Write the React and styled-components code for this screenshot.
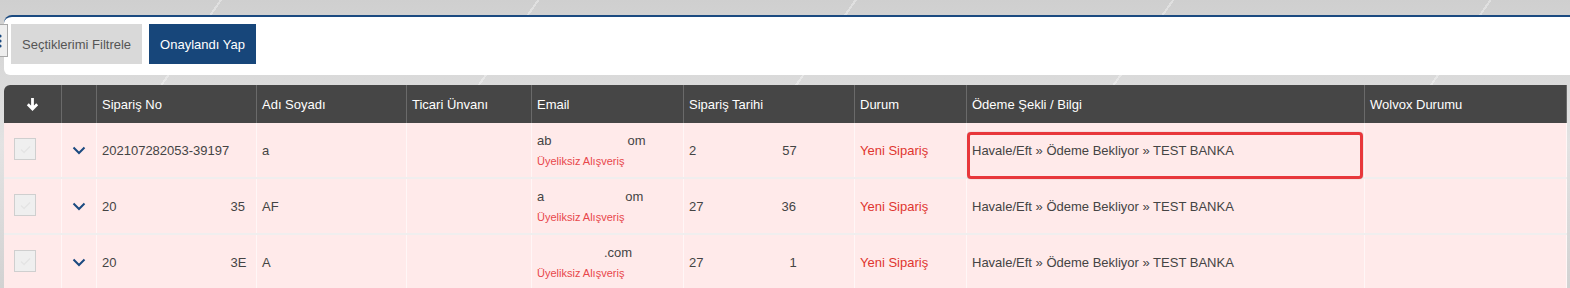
import React from 'react';
import styled, { createGlobalStyle } from 'styled-components';

const Global = createGlobalStyle`
  html, body {
    margin: 0;
    padding: 0;
  }
  body {
    font-family: "Liberation Sans", Arial, sans-serif;
    background: #d9d9d9;
  }
`;

const COLS = '58px 35px 160px 150px 125px 152px 171px 112px 398px 202px';

const Page = styled.div`
  width: 1570px;
  height: 288px;
  overflow: hidden;
  padding: 15px 0 0 4px;
  box-sizing: border-box;
  background:
    repeating-linear-gradient(
      125deg,
      transparent 0 180px,
      rgba(255, 255, 255, 0.35) 180px 182px,
      transparent 182px 260px
    ),
    linear-gradient(180deg, #cfcfcf 0%, #e3e3e3 50%, #d2d2d2 100%);
`;

const Panel = styled.div`
  background: #fff;
  border-top: 2px solid #1b4a80;
  border-top-left-radius: 8px;
  border-bottom-left-radius: 6px;
  height: 60px;
  display: flex;
  align-items: flex-start;
  gap: 7px;
  padding-top: 7px;
  box-sizing: border-box;
  margin-bottom: 10px;
`;

const MenuButton = styled.button`
  margin-left: -8px;
  margin-right: -4px;
  width: 12px;
  height: 33px;
  border: 1px solid #a8a8a8;
  background: #eee;
  padding: 0 0 0 1px;
  display: flex;
  align-items: center;
  justify-content: flex-start;
`;

const Button = styled.button`
  height: 40px;
  border: none;
  padding: 0 11px;
  font-family: "Liberation Sans", Arial, sans-serif;
  font-size: 13px;
  background: ${(p) => (p.$primary ? '#17467a' : '#d9d9d9')};
  color: ${(p) => (p.$primary ? '#fff' : '#555')};
`;

const Table = styled.div`
  width: 1563px;
  border-top-left-radius: 6px;
  overflow: hidden;
  background: #f1f1f1;
`;

const HeadRow = styled.div`
  display: grid;
  grid-template-columns: ${COLS};
  height: 38px;
  background: #464646;
`;

const HeadCell = styled.div`
  display: flex;
  align-items: center;
  justify-content: ${(p) => (p.$center ? 'center' : 'flex-start')};
  padding-left: ${(p) => (p.$center ? '0' : '5px')};
  color: #fff;
  font-size: 13px;
  border-right: 1px solid #6a6a6a;
  &:last-child {
    border-right: 1px solid #6a6a6a;
  }
`;

const Row = styled.div`
  display: grid;
  grid-template-columns: ${COLS};
  height: 54px;
  background: #ffeaea;
  border-bottom: 2px solid #f0eeee;
`;

const Cell = styled.div`
  display: flex;
  flex-direction: ${(p) => (p.$stack ? 'column' : 'row')};
  justify-content: ${(p) => (p.$stack ? 'center' : p.$center ? 'center' : 'flex-start')};
  align-items: ${(p) => (p.$stack ? 'flex-start' : 'center')};
  padding-left: ${(p) => (p.$pad ?? 5)}px;
  color: #444;
  font-size: 13px;
  border-right: 1px solid #fff6f6;
  position: relative;
`;

const CheckBox = styled.span`
  width: 22px;
  height: 22px;
  margin-left: 5px;
  margin-top: -2px;
  background: #efefef;
  border: 1px solid #cfcfcf;
  box-sizing: border-box;
  display: flex;
  align-items: center;
  justify-content: center;
`;

const Gap = styled.span`
  display: inline-block;
  width: ${(p) => p.$w}px;
`;

const Red = styled.span`
  color: #e0362f;
  font-size: 13px;
`;

const Tag = styled.span`
  color: #e8474a;
  font-size: 11px;
  margin-top: 7px;
`;

const Highlight = styled.div`
  position: absolute;
  left: 0;
  right: 1px;
  top: 9px;
  height: 47px;
  border: 3px solid #e8373b;
  border-radius: 4px;
  box-sizing: border-box;
  box-shadow: 0 0 1px rgba(0, 0, 0, 0.4);
`;

const Chevron = () => (
  <svg width="14" height="9" viewBox="0 0 14 9">
    <path d="M1.5 1.5 L7 7 L12.5 1.5" fill="none" stroke="#1b4a80" strokeWidth="2" />
  </svg>
);

const DownArrow = () => (
  <svg width="13" height="14" viewBox="0 0 13 14">
    <path d="M6.5 1 V12 M1.8 7.3 L6.5 12 L11.2 7.3" fill="none" stroke="#fff" strokeWidth="2.8" />
  </svg>
);

const Tick = () => (
  <svg width="11" height="9" viewBox="0 0 11 9">
    <path d="M1 4.5 L4 7.5 L10 1.5" fill="none" stroke="#e4e4e4" strokeWidth="1.5" />
  </svg>
);

const Dots = () => (
  <svg width="4" height="14" viewBox="0 0 4 14">
    <circle cx="2" cy="2" r="1.6" fill="#1b4a80" />
    <circle cx="2" cy="7" r="1.6" fill="#1b4a80" />
    <circle cx="2" cy="12" r="1.6" fill="#1b4a80" />
  </svg>
);

const rows = [
  {
    no: ['202107282053-39197'],
    name: 'a',
    email: ['ab', 76, 'om'],
    date: ['2', 86, '57'],
    highlight: true,
  },
  {
    no: ['20', 114, '35'],
    name: 'AF',
    email: ['a', 81, 'om'],
    date: ['27', 78, '36'],
  },
  {
    no: ['20', 114, '3E'],
    name: 'A',
    email: ['', 67, '.com'],
    date: ['27', 86, '1'],
  },
];

const Parts = ({ parts }) =>
  parts.map((p, i) => (typeof p === 'number' ? <Gap key={i} $w={p} /> : <span key={i}>{p}</span>));

const headers = [
  'Sipariş No',
  'Adı Soyadı',
  'Ticari Ünvanı',
  'Email',
  'Sipariş Tarihi',
  'Durum',
  'Ödeme Şekli / Bilgi',
  'Wolvox Durumu',
];

const App = () => (
  <Page>
    <Global />
    <Panel>
      <MenuButton>
        <Dots />
      </MenuButton>
      <Button>Seçtiklerimi Filtrele</Button>
      <Button $primary>Onaylandı Yap</Button>
    </Panel>
    <Table>
      <HeadRow>
        <HeadCell $center>
          <DownArrow />
        </HeadCell>
        <HeadCell />
        {headers.map((h) => (
          <HeadCell key={h}>{h}</HeadCell>
        ))}
      </HeadRow>
      {rows.map((r, i) => (
        <Row key={i}>
          <Cell>
            <CheckBox>
              <Tick />
            </CheckBox>
          </Cell>
          <Cell $center $pad={0}>
            <Chevron />
          </Cell>
          <Cell>
            <Parts parts={r.no} />
          </Cell>
          <Cell>{r.name}</Cell>
          <Cell />
          <Cell $stack>
            <span>
              <Parts parts={r.email} />
            </span>
            <Tag>Üyeliksiz Alışveriş</Tag>
          </Cell>
          <Cell>
            <Parts parts={r.date} />
          </Cell>
          <Cell>
            <Red>Yeni Sipariş</Red>
          </Cell>
          <Cell>
            {r.highlight && <Highlight />}
            Havale/Eft » Ödeme Bekliyor » TEST BANKA
          </Cell>
          <Cell />
        </Row>
      ))}
    </Table>
  </Page>
);

export default App;
